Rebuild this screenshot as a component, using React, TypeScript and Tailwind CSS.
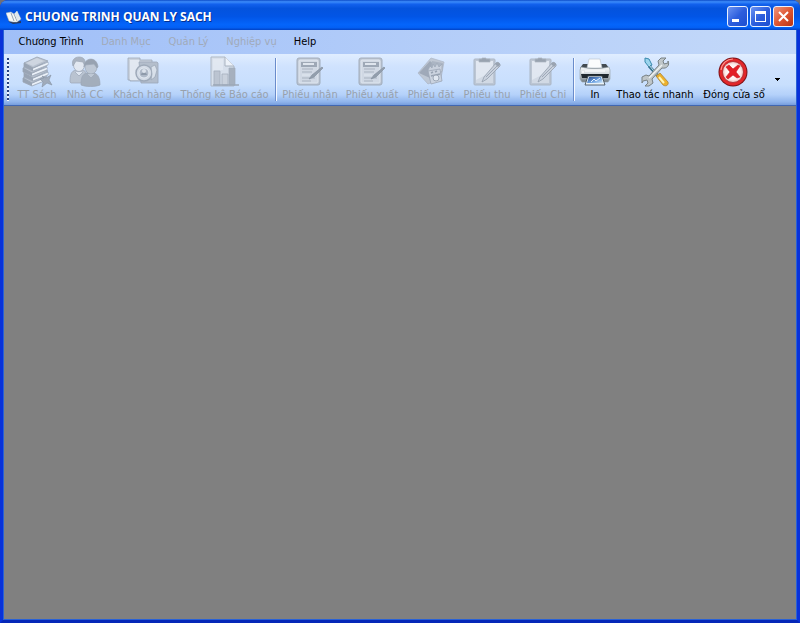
import type { ReactNode } from "react";

const iconClass = "block h-8 w-8 shrink-0";
const fadedIconClass = "block h-8 w-8 shrink-0 opacity-80";

function BooksIcon() {
  return (
    <svg className={fadedIconClass} viewBox="0 0 32 32" aria-hidden="true">
      {[16, 11, 6, 1].map((y, index) => (
        <g key={y} transform={`translate(${index % 2} ${y})`} strokeLinejoin="round">
          <path d="M2 6v4l9 4 15-6V5L11 11Z" fill="#e3e7ec" stroke="#9099a6" strokeWidth=".8" />
          <path d="m11 12.500 15-6" stroke="#f6f8fa" strokeWidth="1" />
          <path d="M2 6 15 0l11 4-15 7Z" fill="#b3bac4" stroke="#8b94a1" strokeWidth=".8" />
          <path d="m2 6 9 5v3l-9-4Z" fill="#8d96a2" />
        </g>
      ))}
      <path d="m5 7 11-5 7 3-11 5Z" fill="#cdd2d9" />
      <path d="m21 20 4 2 5-3-2 5 3 5-5-2-5 4 1-5-3-3 4-1Z" fill="#969fab" stroke="#76808d" strokeWidth=".6" />
    </svg>
  );
}

function PeopleIcon() {
  return (
    <svg className={fadedIconClass} viewBox="0 0 32 32" aria-hidden="true">
      <g stroke="#8f98a5" strokeWidth=".7">
        <path d="M1 26c0-7 1-11 6-12h7c3 1 4 4 4 9v4H2Z" fill="#b5bcc6" />
        <ellipse cx="10" cy="9" rx="5.500" ry="6.500" fill="#e6e9ee" />
        <path d="M4 10C2 4 6 1 10 1c6 0 7 5 6 9l-2-4-7-1Z" fill="#a0a8b3" />
        <path d="m6 16 4 4 4-4" fill="#e2e7ed" />
        <path d="M12 29c0-7 1-11 6-12h7c4 1 6 5 6 12-5 2-14 2-19 0Z" fill="#9aa2ad" />
        <ellipse cx="22" cy="11" rx="6" ry="7" fill="#bac1ca" />
        <path d="M15 11c0-10 13-11 14 0l-1 1-3-4-9 1Z" fill="#89929e" />
        <path d="m18 18 4 4 4-4" fill="#bac1ca" />
      </g>
    </svg>
  );
}

function CustomerFolderIcon() {
  return (
    <svg className={fadedIconClass} viewBox="0 0 32 32" aria-hidden="true">
      <path d="M1 2h12v2h12v3h3v18H3V24H1Z" fill="#c8ced6" stroke="#909aa8" strokeWidth=".8" />
      <path d="M3 4h9v20H3Z" fill="#e6e9ee" />
      <path d="M12 6h18l1 1v20H14Z" fill="#adb5c0" stroke="#909aa8" strokeWidth=".8" />
      <circle cx="17" cy="17" r="8" fill="#d4d9e0" stroke="#939ca8" strokeWidth="1.500" />
      <circle cx="17" cy="17" r="5" fill="#a8b0bb" stroke="#eceff2" />
      <path d="M14 19c0-3 5-4 6 0" fill="#7f8996" />
      <circle cx="17" cy="15" r="2" fill="#dfe3e8" />
      <path d="m24 11 4-2 2 5-2 7-4 3 1-6Z" fill="#dbe0e6" stroke="#8d96a3" strokeWidth=".7" />
    </svg>
  );
}

function ChartDocumentIcon() {
  return (
    <svg className={fadedIconClass} viewBox="0 0 32 32" aria-hidden="true">
      <path d="M2 1h14l9 9v20H2Z" fill="#d9dfe7" stroke="#a5adb8" />
      <path d="M16 1v9h9" fill="#f4f6f8" stroke="#a0a7b1" />
      <path d="M4 3h10v11H4Z" fill="#e5e9ee" />
      <g stroke="#979fa9" strokeWidth=".7">
        <path d="M5 15h6v14H5z" fill="#b8bec7" />
        <path d="M13 18h6v11h-6z" fill="#c9ced5" />
        <path d="M20 12h6v17h-6z" fill="#9da5af" />
      </g>
      <path d="M4 29h26" stroke="#929ba7" strokeWidth="1.500" />
    </svg>
  );
}

function FormIcon() {
  return (
    <svg className={fadedIconClass} viewBox="0 0 32 32" aria-hidden="true">
      <rect x="3" y="2" width="23" height="27" rx="2" fill="#b4bbc5" stroke="#98a1ad" />
      <rect x="5" y="4" width="19" height="23" rx="1" fill="#d2d7de" stroke="#e3e7ec" />
      <path d="M7 6h16v5H7z" fill="#929aa5" />
      <path d="M9 7h11v2H9z" fill="#e3e6ea" />
      <path d="M8 13h11M8 16h10M8 22h13M8 25h9" stroke="#a0a7b1" />
      <path d="M8 19h8" stroke="#e8ebef" />
      <path d="m15 23 3-4L28 11l1 1-9 9Z" fill="#858e99" stroke="#76808b" strokeWidth=".7" />
    </svg>
  );
}

function OrderIcon() {
  return (
    <svg className={fadedIconClass} viewBox="0 0 32 32" aria-hidden="true">
      <path d="M3 17 16 2l13 4-3 16-13 6Z" fill="#bbc1ca" stroke="#a3abb7" strokeWidth=".7" />
      <path d="m4 17 11-12 7 6-7 11Z" fill="#949ca8" />
      <path d="m17 5 11 2-2 10-10-2Z" fill="#a2aab5" />
      <path d="m13 14 2-4 2 2 1-4 2 3 2-4 2 4 3-3v7l-3 4H14Z" fill="#c8cdd5" stroke="#8f98a5" strokeWidth=".7" />
      <path d="m13 15 12-2 2 12-11 3Z" fill="#cbd0d8" stroke="#9098a4" strokeWidth=".8" />
      <path d="m16 17 2-1m2 0 2-1m-6 5 9-2" stroke="#8b94a0" strokeWidth="1.400" />
      <circle cx="21" cy="22" r="3" fill="#e6e9ee" stroke="#939ba6" />
    </svg>
  );
}

function ClipboardIcon() {
  return (
    <svg className={fadedIconClass} viewBox="0 0 32 32" aria-hidden="true">
      <rect x="3" y="3" width="21" height="26" rx="1" fill="#b9c0ca" stroke="#a4adb9" />
      <path d="M5 5h17v21H5z" fill="#e6e9ee" />
      <path d="m5 24 17-9v12H5Z" fill="#d3d8df" />
      <path d="M8 6V3h3V2h4v1h4v3Z" fill="#8a929d" stroke="#a2a9b3" strokeWidth=".7" />
      <path d="m11 26 2-5L25 7c1-2 5 1 4 3L16 23Z" fill="#c9ced6" stroke="#878f9a" strokeWidth=".8" />
      <path d="m15 21 12-12" stroke="#939ba6" />
      <path d="m24 8 3 3 2-2c1-2-3-4-4-2Z" fill="#8c949f" />
    </svg>
  );
}

function PrinterIcon() {
  return (
    <svg className={iconClass} viewBox="0 0 32 32" aria-hidden="true">
      <defs>
        <linearGradient id="printerBody" x2="0" y2="1">
          <stop stopColor="#f8fafb" /><stop offset=".5" stopColor="#d0d6da" /><stop offset="1" stopColor="#6c777e" />
        </linearGradient>
        <linearGradient id="photo" x2="1" y2="1">
          <stop stopColor="#274985" /><stop offset=".55" stopColor="#6b9fe0" /><stop offset="1" stopColor="#d7efff" />
        </linearGradient>
      </defs>
      <path d="M4 8h23l3 4v4H1v-4Z" fill="#434b51" />
      <path d="M10 3h11l2 9H8Z" fill="#fafcfd" stroke="#bec9d3" strokeWidth=".7" />
      <path d="M2 11c9 2 19 2 28 0l1 3v9l-2 3H3l-2-3v-9Z" fill="url(#printerBody)" stroke="#9ba6ae" strokeWidth=".7" />
      <path d="M2 18h28l-1 4H3Z" fill="#20282d" />
      <circle cx="4" cy="16" r="1" fill="#fff" />
      <path d="M9 20h14l3 9H6Z" fill="#e9f2f8" stroke="#35434d" strokeWidth=".8" />
      <path d="M10 21h12l2 6H8Z" fill="url(#photo)" />
      <path d="m12 26 3-3 2 2 4-3" fill="none" stroke="#e7f3ff" />
      <path d="M6 15h20" stroke="#fff" />
    </svg>
  );
}

function ToolsIcon() {
  return (
    <svg className={iconClass} viewBox="0 0 32 32" aria-hidden="true">
      <path d="m6 2 4 1 3 6-3 2-4-5Z" fill="#9bd4ed" stroke="#3889ad" />
      <path d="m10 10 9 10" stroke="#35718e" strokeWidth="3" />
      <path d="m10 9 9 11" stroke="#c1e5f1" />
      <path d="m17 20 4-3 8 9c1 3-2 5-5 3Z" fill="#edb12d" stroke="#a98437" strokeWidth=".8" />
      <path d="m20 21 5 6" stroke="#fff5b5" strokeWidth="2" />
      <path d="m3 21 4-2 3 1L20 9l-1-4 3-3 5 0-3 3 1 3 4-1 0-2c2 4-1 8-6 7L13 23l1 4-4 3-4 0 3-3-1-3-4 1-1 2Z" fill="#bfc6c9" stroke="#788184" strokeLinejoin="round" />
      <path d="m10 22 13-13" stroke="#edf1f2" strokeWidth="1.500" />
    </svg>
  );
}

function CloseWindowIcon() {
  return (
    <svg className={iconClass} viewBox="0 0 32 32" aria-hidden="true">
      <defs>
        <radialGradient id="closeFace"><stop stopColor="#fff" /><stop offset=".7" stopColor="#fff1ef" /><stop offset="1" stopColor="#edc0bd" /></radialGradient>
      </defs>
      <circle cx="15" cy="16" r="14.500" fill="#7d1418" />
      <circle cx="15" cy="16" r="13.500" fill="#e2272a" />
      <circle cx="15" cy="16" r="10.500" fill="url(#closeFace)" stroke="#a8242a" strokeWidth=".8" />
      <path d="m8 11 3-2 4 4 5-4 2 1-4 6 4 5-3 1-4-3-5 4-2-2 4-5Z" fill="#e31f25" stroke="#c9181e" strokeWidth=".6" />
      <path d="M3 14c1-7 6-11 12-11" fill="none" stroke="#ff948d" strokeWidth="1.200" />
    </svg>
  );
}

interface ToolItem {
  label: string;
  width: string;
  icon: ReactNode;
  disabled?: boolean;
}

const catalogTools: ToolItem[] = [
  { label: "TT Sách", width: "w-12", icon: <BooksIcon />, disabled: true },
  { label: "Nhà CC", width: "w-12", icon: <PeopleIcon />, disabled: true },
  { label: "Khách hàng", width: "w-[67px]", icon: <CustomerFolderIcon />, disabled: true },
  { label: "Thống kê Báo cáo", width: "w-[97px]", icon: <ChartDocumentIcon />, disabled: true },
];

const voucherTools: ToolItem[] = [
  { label: "Phiếu nhận", width: "w-[62px]", icon: <FormIcon />, disabled: true },
  { label: "Phiếu xuất", width: "w-[62px]", icon: <FormIcon />, disabled: true },
  { label: "Phiếu đặt", width: "w-14", icon: <OrderIcon />, disabled: true },
  { label: "Phiếu thu", width: "w-14", icon: <ClipboardIcon />, disabled: true },
  { label: "Phiếu Chi", width: "w-14", icon: <ClipboardIcon />, disabled: true },
];

const windowTools: ToolItem[] = [
  { label: "In", width: "w-9", icon: <PrinterIcon /> },
  { label: "Thao tác nhanh", width: "w-[84px]", icon: <ToolsIcon /> },
  { label: "Đóng cửa sổ", width: "w-[74px]", icon: <CloseWindowIcon /> },
];

function ToolGroup({ items }: { items: ToolItem[] }) {
  return (
    <div className="flex shrink-0">
      {items.map((item) => (
        <button
          key={item.label}
          type="button"
          disabled={item.disabled}
          className={`flex shrink-0 flex-col items-center pt-0.5 text-black disabled:text-[#98a1ac] ${item.width}`}
        >
          {item.icon}
          <span className="whitespace-nowrap leading-[14px]">{item.label}</span>
        </button>
      ))}
    </div>
  );
}

function Separator() {
  return <div className="mx-0.5 my-1 w-0.5 shrink-0 border-l border-[#6a8ccb] bg-[#f4f8ff]" />;
}

const menus = [
  { label: "Chương Trình", disabled: false, width: "w-[84px]" },
  { label: "Danh Mục", disabled: true, width: "w-[66px]" },
  { label: "Quản Lý", disabled: true, width: "w-[59px]" },
  { label: "Nghiệp vụ", disabled: true, width: "w-[67px]" },
  { label: "Help", disabled: false, width: "w-10" },
];

const captionButton =
  "flex h-[21px] w-[21px] items-center justify-center rounded-[3px] border border-[#e9f1ff]";

export default function App() {
  return (
    <div className="h-screen bg-[#6f6f78]">
      <div className="flex h-full flex-col overflow-hidden rounded-t-lg bg-[#0831d9] font-['DejaVu_Sans_Condensed','Noto_Sans',sans-serif] text-[11px]">
        <header className="flex h-[30px] shrink-0 items-center bg-[linear-gradient(#0c4cc8_0%,#3c8cfb_6%,#1261ed_14%,#0453dd_28%,#0255e6_55%,#0465fb_82%,#0360f4_92%,#0142c4_100%)] pt-[3px] pr-[6px] pl-[6px]">
          <svg className="h-4 w-4 shrink-0" viewBox="0 0 16 16" aria-hidden="true">
            <path d="m1 5 4 8 10-1v2l-8 1-4-2Z" fill="#27385e" />
            <path d="m0 4 5-1 3 2 3-3 4 8-4 3-4 0-4-1Z" fill="#f6f8f5" stroke="#a8b8c6" strokeWidth=".5" />
            <path d="m5 4 3 8M8 5l3 7" stroke="#7d90a5" strokeWidth=".8" />
            <path d="m9 5 2-3 3 8-3 1Z" fill="#dfe8ec" />
          </svg>
          <h1 className="ml-[3px] grow whitespace-nowrap font-['Open_Sans',sans-serif] text-[12px] leading-4 font-bold text-white [text-shadow:1px_1px_0_#06308f]">
            CHUONG TRINH QUAN LY SACH
          </h1>
          <div className="flex gap-[2px]">
            <button type="button" aria-label="Minimize" className={`${captionButton} bg-linear-to-br from-[#6c93f2] via-[#2d5edd] to-[#1c4ed0]`}>
              <svg className="h-[19px] w-[19px]" viewBox="0 0 19 19" aria-hidden="true"><path d="M4 12h7v3H4z" fill="#fff" /></svg>
            </button>
            <button type="button" aria-label="Maximize" className={`${captionButton} bg-linear-to-br from-[#6c93f2] via-[#2d5edd] to-[#1c4ed0]`}>
              <svg className="h-[19px] w-[19px]" viewBox="0 0 19 19" aria-hidden="true"><path d="M4 4h11v11H4zm1 3v7h9V7z" fill="#fff" fillRule="evenodd" /></svg>
            </button>
            <button type="button" aria-label="Close" className={`${captionButton} bg-linear-to-br from-[#ec957c] via-[#df5632] to-[#b93312]`}>
              <svg className="h-[19px] w-[19px]" viewBox="0 0 19 19" aria-hidden="true"><path d="m5 5 9 9m0-9-9 9" stroke="#fff" strokeWidth="2" /></svg>
            </button>
          </div>
        </header>

        <div className="flex grow flex-col border-x-3 border-b-3 border-x-[#0831d9] border-b-[#0527b8]">
          <div className="flex grow flex-col border-x border-b border-[#2861d6]">
            <nav className="flex h-6 shrink-0 items-center bg-linear-to-r from-[#a0bff8] to-[#c4d9f9] pl-[5px]">
              {menus.map((menu) => (
                <button
                  key={menu.label}
                  type="button"
                  disabled={menu.disabled}
                  className={`whitespace-nowrap text-center leading-4 text-black disabled:text-[#a1aab9] ${menu.width}`}
                >
                  {menu.label}
                </button>
              ))}
            </nav>
            <div role="toolbar" className="flex h-[52px] shrink-0 overflow-hidden border-b border-[#4167b1] bg-[linear-gradient(#e0edff_0%,#cfe2fe_25%,#c8dffd_60%,#b4d1fa_80%,#8fb4ec_94%,#769ddc_100%)] pl-[3px]">
              <div className="my-1 mr-1 w-0.5 shrink-0 bg-[repeating-linear-gradient(#27417f_0px,#27417f_2px,#f4f8ff_2px,#f4f8ff_4px)]" />
              <ToolGroup items={catalogTools} />
              <Separator />
              <ToolGroup items={voucherTools} />
              <Separator />
              <ToolGroup items={windowTools} />
              <button type="button" aria-label="Toolbar options" className="flex w-3 items-center justify-center">
                <svg className="h-[3px] w-[5px]" viewBox="0 0 5 3" aria-hidden="true"><path d="M0 0h5v1H4v1H3v1H2V2H1V1H0z" /></svg>
              </button>
            </div>
            <main className="grow bg-[#808080]" />
          </div>
        </div>
      </div>
    </div>
  );
}
